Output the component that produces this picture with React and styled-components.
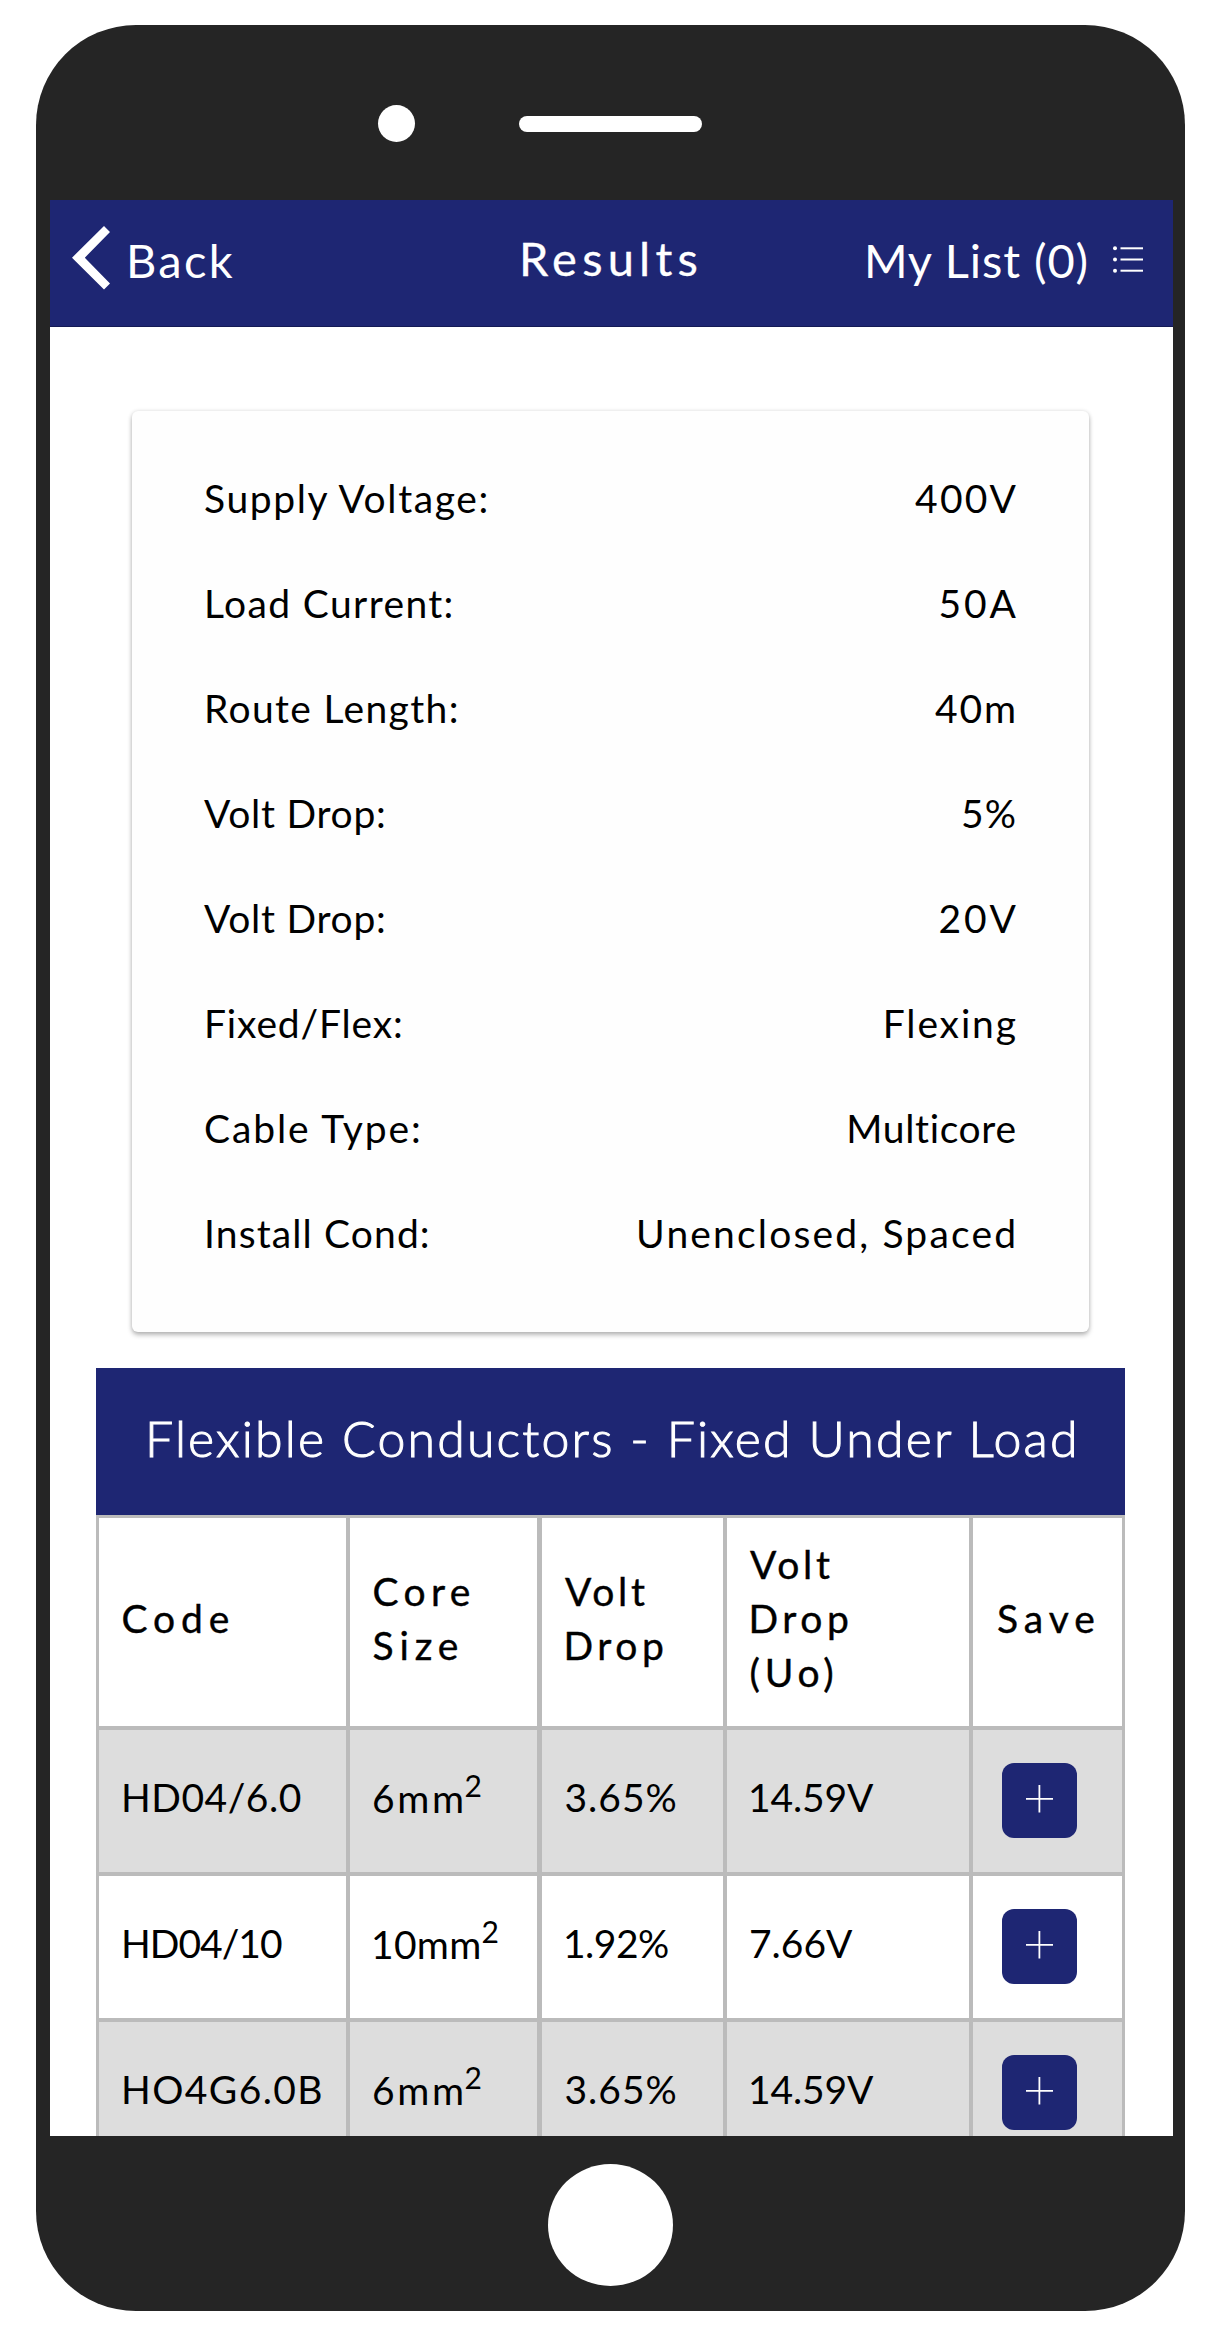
import React from "react";
import styled, { createGlobalStyle } from "styled-components";

const GlobalStyle = createGlobalStyle`
  *, *::before, *::after { box-sizing: border-box; }
  body { margin: 0; background: #fff; }
`;

const NAVY = "#1e2673";
const LINE = "#bbbbbb";

const Page = styled.main`
  width: 1225px;
  height: 2336px;
  padding: 25px 0 0 36px;
  overflow: hidden;
  background: #fff;
  font-family: Lato, "Open Sans", sans-serif;
  color: #000;
`;

const Phone = styled.div`
  display: flex;
  flex-direction: column;
  width: 1149px;
  height: 2286px;
  border-radius: 100px;
  background: #252525;
`;

const Earpiece = styled.div`
  display: flex;
  align-items: center;
  gap: 104px;
  height: 175px;
  padding: 22px 0 0 342px;
`;

const Camera = styled.span`
  width: 37px;
  height: 37px;
  border-radius: 50%;
  background: #fff;
`;

const Speaker = styled.span`
  width: 183px;
  height: 16px;
  border-radius: 8px;
  background: #fff;
`;

const Screen = styled.section`
  flex: none;
  width: 1123px;
  height: 1936px;
  margin-left: 14px;
  overflow: hidden;
  background: #fff;
`;

const HomeArea = styled.div`
  display: flex;
  justify-content: center;
  padding-top: 28px;
`;

const HomeButton = styled.span`
  width: 125px;
  height: 122px;
  border-radius: 50%;
  background: #fff;
`;

const NavBar = styled.header`
  display: grid;
  grid-template-columns: 469px auto 1fr;
  height: 127px;
  padding-right: 30px;
  border-bottom: 1px solid #141a55;
  background: ${NAVY};
  color: #fff;
  font-size: 47px;
`;

const BackLink = styled.div`
  display: flex;
  padding-left: 22px;
  line-height: 120px;
  letter-spacing: 2.3px;

  svg { flex: none; margin: 26px 16px 0 0; }
`;

const Title = styled.h1`
  margin: 0;
  font-size: 47px;
  font-weight: 400;
  line-height: 116px;
  letter-spacing: 5.2px;
  -webkit-text-stroke: 0.3px currentColor;
`;

const ListLink = styled.div`
  display: flex;
  justify-content: flex-end;
  line-height: 120px;
  letter-spacing: 0.9px;
  white-space: nowrap;

  svg { flex: none; margin: 46px 0 0 24px; }
`;

const Card = styled.dl`
  width: 957px;
  height: 921px;
  margin: 84px 0 0 82px;
  padding: 35px 73px 0;
  border-radius: 6px;
  background: #fefefe;
  box-shadow: 0 3px 5px rgba(0, 0, 0, 0.27), 0 0 4px rgba(0, 0, 0, 0.11);
`;

const Row = styled.div`
  display: flex;
  justify-content: space-between;
  height: 105px;
  font-size: 39px;
  line-height: 105px;
  white-space: nowrap;
`;

const Label = styled.dt`
  letter-spacing: ${(p) => p.$track}px;
  text-indent: ${(p) => p.$indent || 0}px;
`;

const Value = styled.dd`
  margin: 0 ${(p) => -p.$track}px 0 0;
  letter-spacing: ${(p) => p.$track}px;
`;

const Results = styled.section`
  width: 1029px;
  margin: 36px 0 0 46px;
`;

const Banner = styled.h2`
  height: 147px;
  margin: 0;
  padding-left: 49px;
  background: ${NAVY};
  color: #fff;
  font-size: 50px;
  font-weight: 300;
  line-height: 141px;
  letter-spacing: 2.17px;
  white-space: nowrap;
  -webkit-text-stroke: 1px currentColor;
`;

const Table = styled.div`
  border: solid ${LINE};
  border-width: 3px 3px 0;
`;

const Line = styled.div`
  display: grid;
  grid-template-columns: 251px 192px 185px 246px 149px;
  height: ${(p) => (p.$head ? 212 : 146)}px;
  border-bottom: 4px solid ${LINE};
  background: ${(p) => (p.$shaded ? "#dddddd" : "#ffffff")};
`;

const Cell = styled.div`
  display: flex;
  flex-direction: column;
  justify-content: center;
  padding: 0 0 8px;
  border-right: ${(p) => p.$rule}px solid ${LINE};
  font-size: 39px;
  line-height: 54px;
  white-space: nowrap;
`;

const Text = styled.span`
  padding-left: ${(p) => p.$indent}px;
  letter-spacing: ${(p) => p.$track}px;
`;

const HeadText = styled(Text)`
  -webkit-text-stroke: 0.4px currentColor;
`;

const SizeText = styled(Text)`
  padding-top: 2px;
`;

const Sup = styled.sup`
  margin-left: ${(p) => p.$pull}px;
  font-size: 30px;
  line-height: 0;
  vertical-align: 16px;
  letter-spacing: 0;
`;

const SaveCell = styled.div`
  padding: 33px 0 0 29px;
`;

const SaveButton = styled.button`
  display: block;
  width: 75px;
  height: 75px;
  padding: 0;
  border: 0;
  border-radius: 12px;
  background: ${NAVY};

  svg { display: block; }
`;

const summary = [
  ["Supply Voltage:", 1.62, -1, "400V", 2.2],
  ["Load Current:", 1.38, -1, "50A", 2.88],
  ["Route Length:", 1.35, -1, "40m", 1.88],
  ["Volt Drop:", 0.74, -1, "5%", 1.2],
  ["Volt Drop:", 0.74, -1, "20V", 2.88],
  ["Fixed/Flex:", 0.84, -1, "Flexing", 1.85],
  ["Cable Type:", 1.9, -1, "Multicore", 0.65],
  ["Install Cond:", 1.12, -1, "Unenclosed, Spaced", 2.17],
];

const rules = [4, 5, 4, 4, 0];

const headings = [
  [["Code", 5.9, 22.5]],
  [["Core", 5.4, 22.5], ["Size", 5.9, 22.5]],
  [["Volt", 3.73, 23], ["Drop", 4.6, 21.5]],
  [["Volt", 3.73, 23], ["Drop", 4.6, 21.5], ["(Uo)", 4.8, 22.5]],
  [["Save", 5.9, 24]],
];

const six = { size: ["6mm", 2.6, 22, -2], drop: ["3.65%", 0.98, 22.5], volts: ["14.59V", -0.14, 21] };

const cables = [
  { code: ["HD04/6.0", 0.5, 22], ...six },
  { code: ["HD04/10", -0.99, 22], size: ["10mm", 0.3, 21, 0], drop: ["1.92%", -0.52, 21], volts: ["7.66V", -0.02, 22] },
  { code: ["HO4G6.0B", 1.4, 22], ...six },
];

const Chevron = () => (
  <svg width="38" height="64" viewBox="0 0 38 64" fill="#fff">
    <path d="M0 31.7 32 0 38 6 12.8 31.7 38 57.4 32 63.4Z" />
  </svg>
);

const ListIcon = () => (
  <svg width="30" height="28" viewBox="0 0 30 28" fill="#fff">
    {[2.3, 13.5, 24.7].map((y) => (
      <g key={y}>
        <circle cx="2" cy={y} r="2" />
        <rect x="7.5" y={y - 1} width="22.5" height="2" />
      </g>
    ))}
  </svg>
);

const PlusIcon = () => (
  <svg width="75" height="75" viewBox="0 0 75 75" stroke="#fff" strokeWidth="1.8">
    <path d="M24 35.8H51M37.4 22V49.5" />
  </svg>
);

export default function App() {
  return (
    <Page>
      <GlobalStyle />
      <Phone>
        <Earpiece>
          <Camera />
          <Speaker />
        </Earpiece>
        <Screen>
          <NavBar>
            <BackLink><Chevron />Back</BackLink>
            <Title>Results</Title>
            <ListLink>My List (0)<ListIcon /></ListLink>
          </NavBar>
          <Card>
            {summary.map(([label, labelTrack, indent, value, valueTrack], i) => (
              <Row key={i}>
                <Label $track={labelTrack} $indent={indent}>{label}</Label>
                <Value $track={valueTrack}>{value}</Value>
              </Row>
            ))}
          </Card>
          <Results>
            <Banner>Flexible Conductors - Fixed Under Load</Banner>
            <Table>
              <Line $head>
                {headings.map((words, col) => (
                  <Cell key={col} $rule={rules[col]}>
                    {words.map(([text, track, indent]) => (
                      <HeadText key={text} $track={track} $indent={indent}>{text}</HeadText>
                    ))}
                  </Cell>
                ))}
              </Line>
              {cables.map(({ code, size, drop, volts }, i) => (
                <Line key={i} $shaded={i % 2 === 0}>
                  <Cell $rule={4}><Text $track={code[1]} $indent={code[2]}>{code[0]}</Text></Cell>
                  <Cell $rule={5}>
                    <SizeText $track={size[1]} $indent={size[2]}>{size[0]}<Sup $pull={size[3]}>2</Sup></SizeText>
                  </Cell>
                  <Cell $rule={4}><Text $track={drop[1]} $indent={drop[2]}>{drop[0]}</Text></Cell>
                  <Cell $rule={4}><Text $track={volts[1]} $indent={volts[2]}>{volts[0]}</Text></Cell>
                  <SaveCell><SaveButton aria-label="Save"><PlusIcon /></SaveButton></SaveCell>
                </Line>
              ))}
            </Table>
          </Results>
        </Screen>
        <HomeArea><HomeButton /></HomeArea>
      </Phone>
    </Page>
  );
}
